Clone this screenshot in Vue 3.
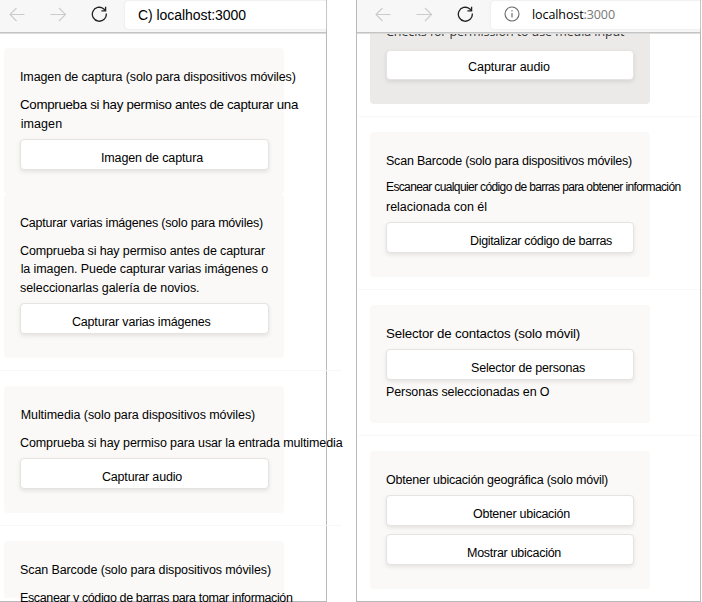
<script setup>
// Spreads a label's letters evenly so that it takes up the given width
const vFit = {
  mounted(el, { value }) {
    const natural = el.getBoundingClientRect().width
    el.style.letterSpacing = (value - natural) / el.textContent.length + 'px'
  },
}

const left = [
  {
    cls: 'joined',
    items: [
      { k: 'title', t: 'Imagen de captura (solo para dispositivos móviles)', w: 275.8 },
      { k: 'line large', t: 'Comprueba si hay permiso antes de capturar una', w: 278 },
      { k: 'next', t: 'imagen', w: 41.5, gap: 'one inset' },
      { k: 'button', t: 'Imagen de captura', w: 102, pad: 80 },
    ],
  },
  {
    items: [
      { k: 'title', t: 'Capturar varias imágenes (solo para móviles)', w: 243 },
      { k: 'line', t: 'Comprueba si hay permiso antes de capturar', w: 245 },
      { k: 'next', t: 'la imagen. Puede capturar varias imágenes o', w: 247.5, gap: 'inset' },
      { k: 'next one', t: 'seleccionarlas galería de novios.', w: 179.5 },
      { k: 'button', t: 'Capturar varias imágenes', w: 138.5, pad: 51 },
    ],
  },
  {
    items: [
      { k: 'title', t: 'Multimedia (solo para dispositivos móviles)', w: 234.5, gap: 'inset' },
      { k: 'line', t: 'Comprueba si hay permiso para usar la entrada multimedia', w: 322.5 },
      { k: 'button', t: 'Capturar audio', w: 80, pad: 81 },
    ],
  },
  {
    cls: 'cut',
    items: [
      { k: 'title', t: 'Scan Barcode (solo para dispositivos móviles)', w: 251 },
      { k: 'line', t: 'Escanear y código de barras para tomar información', w: 272.5 },
    ],
  },
]

const right = [
  {
    cls: 'hovered',
    items: [
      { k: 'native', t: 'Checks for permission to use media input', w: 238.5 },
      { k: 'button raised', t: 'Capturar audio', w: 82, pad: 81 },
    ],
  },
  {
    items: [
      { k: 'title', t: 'Scan Barcode (solo para dispositivos móviles)', w: 246 },
      { k: 'line close small', t: 'Escanear cualquier código de barras para obtener información', w: 294.5 },
      { k: 'next two', t: 'relacionada con él', w: 101 },
      { k: 'button', t: 'Digitalizar código de barras', w: 142, pad: 83 },
    ],
  },
  {
    cls: 'short',
    items: [
      { k: 'title large', t: 'Selector de contactos (solo móvil)', w: 194 },
      { k: 'button', t: 'Selector de personas', w: 114, pad: 84 },
      { k: 'next three', t: 'Personas seleccionadas en O', w: 163.5 },
    ],
  },
  {
    items: [
      { k: 'title', t: 'Obtener ubicación geográfica (solo móvil)', w: 222 },
      { k: 'button', t: 'Obtener ubicación', w: 97, pad: 86 },
      { k: 'button second', t: 'Mostrar ubicación', w: 94, pad: 80 },
    ],
  },
]

const panels = [
  { side: 'left', cards: left },
  { side: 'right', cards: right },
]
</script>

<template>
  <main class="page">
    <section v-for="p in panels" :key="p.side" class="panel" :class="p.side">
      <header class="toolbar">
        <svg class="nav" viewBox="0 0 82 20" fill="none">
          <g stroke="#cbcbcb" stroke-width="1.1">
            <path d="M16.5 7.5H2M8.5 1L2 7.5L8.5 14" />
            <path d="M42.5 7.5H57.5M51 1L57.5 7.5L51 14" />
          </g>
        </svg>
        <svg class="reload" viewBox="0 0 17 17" fill="none" stroke="#222" stroke-width="1.3">
          <path d="M15.3 7.5A7 7 0 1 1 12.6 2.7L14.4 4.5" />
          <path d="M14.6 0.8V4.8H10.4" />
        </svg>
        <div class="address">
          <template v-if="p.side === 'left'">
            <span v-fit="108" class="txt">C) localhost:3000</span>
          </template>
          <template v-else>
            <svg class="info" viewBox="0 0 16 16" fill="none" stroke="#666" stroke-width="1.1">
              <circle cx="8" cy="8" r="7" />
              <path d="M8 7V11.5M8 4.2V5.5" />
            </svg>
            <span v-fit="83" class="txt">localhost<i>:3000</i></span>
          </template>
        </div>
      </header>
      <div class="content">
        <template v-for="(c, i) in p.cards" :key="i">
          <article class="card" :class="c.cls">
            <template v-for="(it, j) in c.items" :key="j">
              <button v-if="it.pad" :class="it.k" :style="{ paddingLeft: it.pad + 'px' }">
                <span v-fit="it.w" class="txt">{{ it.t }}</span>
              </button>
              <div v-else class="text" :class="[it.k, it.gap]">
                <span v-fit="it.w" class="txt">{{ it.t }}</span>
              </div>
            </template>
          </article>
          <div v-if="c.cls !== 'joined' && i < p.cards.length - 1" class="rule"></div>
        </template>
      </div>
    </section>
  </main>
</template>

<style>
body {
  margin: 0;
  background: #fff;
}
</style>

<style scoped>
.page {
  display: flex;
  gap: 29px;
  width: 702px;
  height: 602px;
  overflow: hidden;
  font-family: "Liberation Sans", Arial, sans-serif;
  font-size: 12.5px;
  color: #000;
}
.panel {
  box-sizing: border-box;
  height: 602px;
  border-right: 1px solid #b9b9b9;
  border-bottom: 1px solid #b9b9b9;
}
.left {
  width: 327px;
}
.right {
  width: 345px;
  border-left: 1px solid #b9b9b9;
}
.txt {
  display: inline-block;
  white-space: pre;
}
.toolbar {
  position: relative;
  z-index: 1;
  box-sizing: border-box;
  display: flex;
  align-items: flex-start;
  height: 34px;
  padding-left: 8px;
  background: #f7f7f7;
  border-bottom: 1px solid #dcdcdc;
  box-shadow: inset 0 -1px #c4c4c4;
}
.right .toolbar {
  padding-left: 17px;
}
.nav {
  width: 82px;
  height: 20px;
  margin-top: 7px;
}
.reload {
  width: 17px;
  height: 17px;
  margin: 6px -1px 0 1px;
}
.address {
  box-sizing: border-box;
  display: flex;
  flex: 1;
  height: 28px;
  margin: 1px 0 0 18px;
  padding-left: 13px;
  border-radius: 4px 0 0 4px;
  background: #fff;
  box-shadow: 0 0 3px #e4e4e4;
  font-size: 14px;
  line-height: 28px;
}
.right .address {
  font-family: "Open Sans", sans-serif;
  font-size: 12.5px;
  line-height: 27px;
}
.address i {
  font-style: normal;
  color: #777;
}
.info {
  width: 16px;
  height: 16px;
  margin: 5px 12px 0 0;
}
.content {
  height: 567px;
  padding-left: 4px;
}
.left .content {
  padding-top: 14px;
}
.right .content {
  padding-left: 13px;
}
.card {
  box-sizing: border-box;
  width: 280px;
  padding: 20px 16px 24px;
  border-radius: 4px;
  background: #faf9f8;
}
.hovered {
  display: flow-root;
  height: 70px;
  padding-top: 0;
  border-radius: 0 0 4px 4px;
  background: #ebeae9;
}
.short {
  padding-bottom: 22px;
}
.cut {
  height: 57px;
  border-radius: 4px 4px 0 0;
}
.rule {
  width: 342px;
  height: 1px;
  margin: 12px 0 15px -4px;
  background: #f7f7f7;
}
.right .rule {
  width: 341px;
  margin-left: -12px;
}
.text {
  height: 18px;
  line-height: 18px;
  white-space: nowrap;
}
.inset {
  padding-left: 0.7px;
}
.line {
  margin-top: 10px;
}
.close {
  margin-top: 8px;
}
.one {
  margin-top: 1px;
}
.two {
  margin-top: 2px;
}
.three {
  margin-top: 3px;
}
.large {
  font-size: 13.3px;
}
.small {
  font-size: 12px;
}
.native {
  height: 16px;
  margin-top: -11px;
  margin-bottom: 11px;
  line-height: 18px;
  font-family: "Open Sans", sans-serif;
  color: #333;
}
.button {
  box-sizing: border-box;
  display: block;
  width: 249px;
  height: 31px;
  margin: 6px 0 0;
  padding: 9px 0 2px;
  border: 1px solid #e4e3e2;
  border-radius: 4px;
  background: #fff;
  box-shadow: 0 2px 4px rgba(0, 0, 0, 0.09);
  font: inherit;
  line-height: 18px;
  color: #000;
  text-align: left;
  white-space: nowrap;
}
.right .button {
  width: 248px;
}
.button .txt {
  display: block;
  width: max-content;
}
.second {
  margin-top: 8px;
}
.raised {
  height: 30px;
  margin-top: 0;
  padding: 7px 0 3px;
}
</style>
